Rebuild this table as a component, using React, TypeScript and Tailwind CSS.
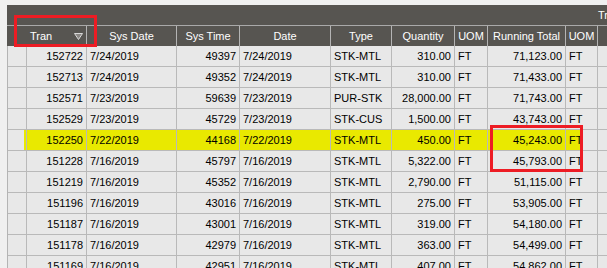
const cols = [
  { key: 'tran', label: 'Tran', w: 'w-[60px]', align: 'text-right' },
  { key: 'sysDate', label: 'Sys Date', w: 'w-[90px]', align: 'text-left' },
  { key: 'sysTime', label: 'Sys Time', w: 'w-[63px]', align: 'text-right' },
  { key: 'date', label: 'Date', w: 'w-[91px]', align: 'text-left' },
  { key: 'type', label: 'Type', w: 'w-[61px]', align: 'text-left' },
  { key: 'qty', label: 'Quantity', w: 'w-[63px]', align: 'text-right' },
  { key: 'uom', label: 'UOM', w: 'w-[33px]', align: 'text-left' },
  { key: 'total', label: 'Running Total', w: 'w-[78px]', align: 'text-right' },
  { key: 'uom2', label: 'UOM', w: 'w-[32px]', align: 'text-left' },
] as const;

type Row = Record<(typeof cols)[number]['key'], string> & { hi?: boolean };

const rows: Row[] = [
  { tran: '152722', sysDate: '7/24/2019', sysTime: '49397', date: '7/24/2019', type: 'STK-MTL', qty: '310.00', uom: 'FT', total: '71,123.00', uom2: 'FT' },
  { tran: '152713', sysDate: '7/24/2019', sysTime: '49352', date: '7/24/2019', type: 'STK-MTL', qty: '310.00', uom: 'FT', total: '71,433.00', uom2: 'FT' },
  { tran: '152571', sysDate: '7/23/2019', sysTime: '59639', date: '7/23/2019', type: 'PUR-STK', qty: '28,000.00', uom: 'FT', total: '71,743.00', uom2: 'FT' },
  { tran: '152529', sysDate: '7/23/2019', sysTime: '45729', date: '7/23/2019', type: 'STK-CUS', qty: '1,500.00', uom: 'FT', total: '43,743.00', uom2: 'FT' },
  { tran: '152250', sysDate: '7/22/2019', sysTime: '44168', date: '7/22/2019', type: 'STK-MTL', qty: '450.00', uom: 'FT', total: '45,243.00', uom2: 'FT', hi: true },
  { tran: '151228', sysDate: '7/16/2019', sysTime: '45797', date: '7/16/2019', type: 'STK-MTL', qty: '5,322.00', uom: 'FT', total: '45,793.00', uom2: 'FT' },
  { tran: '151219', sysDate: '7/16/2019', sysTime: '45352', date: '7/16/2019', type: 'STK-MTL', qty: '2,790.00', uom: 'FT', total: '51,115.00', uom2: 'FT' },
  { tran: '151196', sysDate: '7/16/2019', sysTime: '43016', date: '7/16/2019', type: 'STK-MTL', qty: '275.00', uom: 'FT', total: '53,905.00', uom2: 'FT' },
  { tran: '151187', sysDate: '7/16/2019', sysTime: '43001', date: '7/16/2019', type: 'STK-MTL', qty: '319.00', uom: 'FT', total: '54,180.00', uom2: 'FT' },
  { tran: '151178', sysDate: '7/16/2019', sysTime: '42979', date: '7/16/2019', type: 'STK-MTL', qty: '363.00', uom: 'FT', total: '54,499.00', uom2: 'FT' },
  { tran: '151169', sysDate: '7/16/2019', sysTime: '42951', date: '7/16/2019', type: 'STK-MTL', qty: '407.00', uom: 'FT', total: '54,862.00', uom2: 'FT' },
];

function FilterIcon() {
  return (
    <svg width="9" height="7" viewBox="0 0 9 7" className="shrink-0">
      <path d="M0.5 0.5 H8.5 L4.5 6.5 Z" fill="#8a8784" stroke="#d8d8d8" strokeWidth="1" />
    </svg>
  );
}

export default function App() {
  return (
    <div className="relative w-[607px] h-[268px] overflow-hidden bg-[#f0f0f0] pt-[5px] pl-[7px] text-[11px] leading-none font-['Liberation_Sans',Arial,sans-serif]">
      <div className="flex flex-col">
        {/* group band */}
        <div className="h-[21px] bg-[#575551] border-b border-[#a9a9a9] flex items-center text-white whitespace-nowrap overflow-hidden">
          <div className="w-[591px] shrink-0" />
          <span>Transactions</span>
        </div>

        {/* column headers */}
        <div className="h-[20px] bg-[#575551] text-white flex whitespace-nowrap">
          <div className="w-[20px] shrink-0" />
          {cols.map((c) => (
            <div
              key={c.key}
              className={`${c.w} shrink-0 border-r border-[#b4b4b4] flex items-center ${
                c.key === 'tran' ? 'justify-between pl-[3px] pr-[3px]' : 'justify-center'
              }`}
            >
              <span>{c.label}</span>
              {c.key === 'tran' && <FilterIcon />}
            </div>
          ))}
          <div className="flex-1" />
        </div>

        {/* data rows */}
        {rows.map((r) => (
          <div key={r.tran} className="h-[21px] flex border-l border-[#b4b4b4] text-black whitespace-nowrap">
            <div className="w-[19px] shrink-0 border-r border-b border-[#b9b9b9] bg-[#e8e8e8] flex justify-end">
              {r.hi && <div className="w-[2px] bg-[#e9e900]" />}
            </div>
            {cols.map((c) => (
              <div
                key={c.key}
                className={`${c.w} shrink-0 relative border-r border-b border-[#b9b9b9] flex items-center ${
                  c.align === 'text-right' ? 'justify-end pr-[3px]' : 'justify-start pl-[3px]'
                } ${r.hi && c.key !== 'uom2' ? 'bg-[#e9e900]' : 'bg-[#e8e8e8]'}`}
              >
                {r.hi && c.key === 'uom2' && <div className="absolute left-0 top-0 bottom-0 w-[14px] bg-[#e9e900]" />}
                <span className="relative">{r[c.key]}</span>
              </div>
            ))}
            <div className="flex-1 border-b border-[#b9b9b9] bg-[#e8e8e8]" />
          </div>
        ))}
      </div>

      {/* red annotation boxes */}
      <div className="absolute left-[14px] top-[15px] w-[83px] h-[32px] border-[3px] border-[#ed1c24]" />
      <div className="absolute left-[490px] top-[125px] w-[93px] h-[47px] border-[3px] border-[#ed1c24]" />
    </div>
  );
}
